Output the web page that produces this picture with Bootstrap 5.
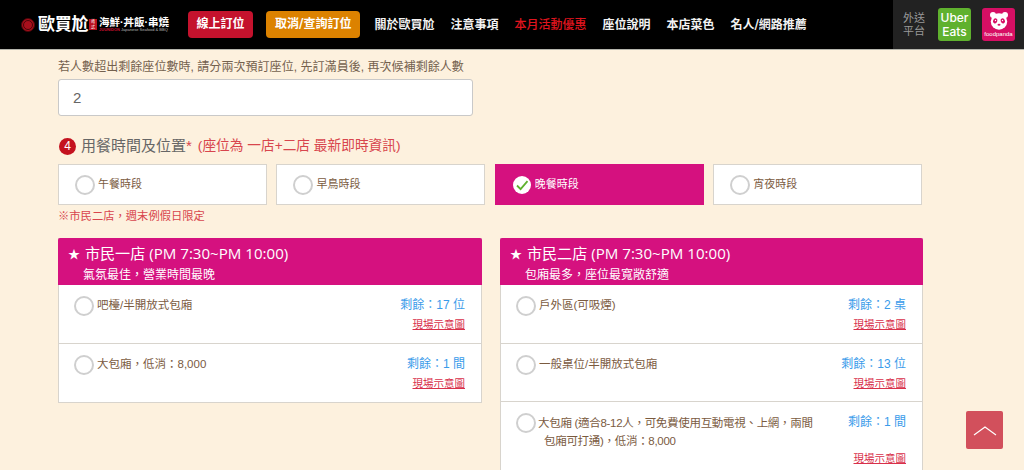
<!DOCTYPE html>
<html lang="zh-Hant">
<head>
  <meta charset="UTF-8">
  <meta name="viewport" content="width=device-width, initial-scale=1.0">
  <title>線上訂位</title>
  <link href="https://cdn.jsdelivr.net/npm/bootstrap@5.3.0/dist/css/bootstrap.min.css" rel="stylesheet">
  <style>
    html, body {
      height: 470px;
      overflow: hidden;
    }
    body {
      background-color: #fdf1de;
      color: #7b5b3f;
      font-family: "Liberation Sans", "Noto Sans CJK TC", sans-serif;
      font-size: 12px;
    }
    .top-bar {
      height: 50px;
      background-color: #000;
      border-bottom: 1px solid #b5b5ad;
      padding: 0;
    }
    .brand {
      width: 152px;
      margin: 0 16px 0 20px;
      padding-left: 1px;
      color: #fff;
      line-height: 1;
      white-space: nowrap;
    }
    .brand-mark {
      width: 14px;
      height: 14px;
      flex: none;
      border-radius: 50%;
      background-color: #a80f1c;
      border: 3px double #4a0509;
    }
    .brand-name {
      font-size: 17px;
      font-weight: 700;
      letter-spacing: -.3px;
      margin-left: 3px;
    }
    .brand-seal {
      width: 8px;
      height: 11px;
      margin: 0 2px 0 1px;
      flex: none;
      background-color: #b90f1e;
      font-size: 4px;
      line-height: 5.5px;
      text-align: center;
    }
    .brand-tag {
      font-size: 10.5px;
      font-weight: 700;
      margin-bottom: 1px;
    }
    .brand-sub {
      font-size: 4px;
      color: #bbb;
    }
    .brand-sub b {
      color: #c8102e;
    }
    .nav-btn {
      height: 27px;
      padding: 0 8.5px;
      border: 0;
      border-radius: 4px;
      color: #fff;
      font-size: 12px;
      font-weight: 700;
      line-height: 27px;
      margin-right: 13px;
    }
    .nav-btn-red { background-color: #c4122d; }
    .nav-btn-orange {
      background-color: #dc8200;
      padding: 0 9px;
      margin-right: 14px;
      font-family: "DejaVu Serif", "Noto Sans CJK TC", serif;
    }
    .nav-btn-red:hover { background-color: #c4122d; color: #fff; }
    .nav-btn-orange:hover { background-color: #dc8200; color: #fff; }
    .site-link {
      color: #f2f2f2;
      font-family: "DejaVu Serif", "Noto Sans CJK TC", serif;
      font-size: 12px;
      font-weight: 700;
      text-decoration: none;
      margin-right: 16px;
      white-space: nowrap;
    }
    .site-link-hot { color: #e0141e; font-weight: 500; }
    .delivery {
      width: 131px;
      height: 49px;
      background-color: #222;
      gap: 11px;
      padding-left: 10px;
      color: #999;
      font-size: 11px;
      line-height: 13px;
    }
    .delivery-logo {
      width: 33px;
      height: 33px;
      border-radius: 3px;
      color: #fff;
      text-align: center;
      text-decoration: none;
      flex: none;
    }
    .uber-logo {
      margin-left: 2px;
      background-color: #5fb12e;
      font-size: 12px;
      line-height: 14px;
      padding-top: 3px;
      font-family: "Inter", sans-serif;
      font-weight: 500;
    }
    .panda-logo {
      background-color: #d70f64;
      font-size: 6px;
      line-height: 7px;
      padding-top: 3px;
      white-space: nowrap;
      overflow: hidden;
    }
    .panda-logo svg {
      display: block;
      margin: 0 auto 1px;
    }
    .form-wrap {
      width: 865px;
      margin-left: 58px;
      padding-top: 9px;
    }
    .seat-hint {
      line-height: 16px;
      margin-bottom: 4px;
      letter-spacing: .05px;
      color: #74614e;
    }
    .seat-input {
      width: 415px;
      height: 37px;
      padding: 0 14px;
      border: 1px solid #c9c9c9;
      border-radius: 3px;
      color: #666;
      font-size: 15px;
    }
    .step-title {
      margin-top: 20px;
      height: 20px;
      font-size: 15px;
      line-height: 20px;
      color: #666;
      font-weight: 400;
    }
    .step-num {
      width: 17px;
      height: 17px;
      margin: 0 5px 0 1px;
      flex: none;
      border-radius: 50%;
      background-color: #c4121f;
      color: #fff;
      font-size: 12px;
      line-height: 17px;
      text-align: center;
    }
    .step-star { color: #d8454d; margin-right: 6px; }
    .step-note { color: #d8454d; font-size: 13.7px; }
    .time-grid {
      display: grid;
      grid-template-columns: repeat(4, 209px);
      column-gap: 9.4px;
      margin-top: 8px;
    }
    .time-opt {
      height: 41px;
      padding-left: 16px;
      background-color: #fff;
      border: 1px solid #d8d4cd;
      font-size: 11px;
      gap: 3px;
    }
    .time-opt-on {
      background-color: #d5117f;
      border-color: #d5117f;
      color: #fff;
    }
    .tick {
      width: 20px;
      height: 20px;
      flex: none;
      border-radius: 50%;
      border: 2px solid #cfcfcf;
      background-color: #fff;
    }
    .tick-on {
      width: 18px;
      height: 18px;
      margin: 0 1px;
      border: 0;
    }
    .tick-on svg { display: block; }
    .weekend-note {
      color: #d8454d;
      font-size: 11.3px;
      line-height: 16px;
      margin-top: 3px;
    }
    .store-row {
      margin-top: 14px;
      gap: 18px;
      align-items: flex-start;
    }
    .store-card {
      --bs-card-inner-border-radius: 2px;
      width: 424px;
      flex: none;
      border: 1px solid #d8d4cd;
      border-radius: 0;
      background-color: #fff;
      color: #7b5b3f;
    }
    .store-card:last-child { width: 423px; }
    .store-head {
      height: 47px;
      margin: -1px -1px 0;
      padding: 5px 10px 0;
      background-color: #d5117f;
      border: 0;
      color: #fff;
      font-family: "Open Sans", "Noto Sans CJK TC", sans-serif;
      font-size: 15.1px;
      line-height: 20px;
    }
    .store-star { font-size: 12px; margin-right: 1px; }
    .store-sub {
      font-size: 12px;
      line-height: 16px;
      padding-left: 15px;
      margin-top: 2px;
    }
    .seat-row {
      min-height: 58.5px;
      padding: 11px 16px 0 15px;
      border-color: #d8d4cd;
      color: #7b5b3f;
      font-size: 11.5px;
      gap: 3px;
    }
    .seat-row:last-child { border-bottom: 0; }
    .seat-row-tall { padding-bottom: 16px; }
    .seat-name {
      line-height: 18px;
      width: 328px;
    }
    .seat-name-wrap {
      margin-left: -1px;
      padding-top: 1px;
      letter-spacing: -.3px;
    }
    .seat-name-wrap span {
      display: block;
      padding-left: 6px;
    }
    .seat-side {
      margin-left: auto;
      text-align: right;
      white-space: nowrap;
    }
    .seat-left {
      color: #3a9bea;
      font-size: 12px;
      line-height: 18px;
    }
    .seat-map {
      display: block;
      margin-top: 2px;
      color: #d8304a;
      font-size: 10.5px;
      line-height: 16px;
    }
    .seat-map-low { margin-top: 19px; }
    .to-top {
      position: fixed;
      left: 966px;
      top: 411px;
      width: 37px;
      height: 38px;
      border-radius: 2px;
      background-color: #d2505c;
    }
    .to-top svg { display: block; margin: 0 auto; }
  </style>
</head>
<body>
  <nav class="navbar top-bar flex-nowrap">
    <div class="d-flex align-items-center w-100">
      <a class="brand d-flex align-items-center text-decoration-none" href="#">
        <span class="brand-mark"></span>
        <span class="brand-name">歐買尬</span>
        <span class="brand-seal">道<br>式</span>
        <span>
          <div class="brand-tag">海鮮·丼飯·串燒</div>
          <div class="brand-sub"><b>JUUNIDON</b> Japanese Seafood &amp; BBQ</div>
        </span>
      </a>
      <a class="btn nav-btn nav-btn-red" href="#">線上訂位</a>
      <a class="btn nav-btn nav-btn-orange" href="#">取消/查詢訂位</a>
      <a class="site-link" href="#">關於歐買尬</a>
      <a class="site-link" href="#">注意事項</a>
      <a class="site-link site-link-hot" href="#">本月活動優惠</a>
      <a class="site-link" href="#">座位說明</a>
      <a class="site-link" href="#">本店菜色</a>
      <a class="site-link" href="#">名人/網路推薦</a>
      <div class="delivery d-flex align-items-center ms-auto">
        <div class="text-center">外送<br>平台</div>
        <a class="delivery-logo uber-logo" href="#">Uber<br>Eats</a>
        <a class="delivery-logo panda-logo" href="#">
          <svg width="20" height="19" viewBox="0 0 20 19">
            <circle cx="4" cy="4" r="3" fill="#fff"/>
            <circle cx="16" cy="4" r="3" fill="#fff"/>
            <circle cx="10" cy="10.5" r="8.2" fill="#fff"/>
            <ellipse cx="6.2" cy="9.8" rx="2.1" ry="2.6" fill="#d70f64" transform="rotate(25 6.2 9.8)"/>
            <ellipse cx="13.8" cy="9.8" rx="2.1" ry="2.6" fill="#d70f64" transform="rotate(-25 13.8 9.8)"/>
            <circle cx="6.5" cy="9.5" r=".7" fill="#fff"/>
            <circle cx="13.5" cy="9.5" r=".7" fill="#fff"/>
            <ellipse cx="10" cy="13.8" rx="1.5" ry="1" fill="#d70f64"/>
          </svg>
          foodpanda
        </a>
      </div>
    </div>
  </nav>

  <main class="form-wrap">
    <div class="seat-hint">若人數超出剩餘座位數時, 請分兩次預訂座位, 先訂滿員後, 再次候補剩餘人數</div>
    <input class="form-control seat-input" type="text" value="2">

    <h2 class="step-title d-flex align-items-center mb-0">
      <span class="step-num">4</span>用餐時間及位置<span class="step-star">*</span>
      <span class="step-note">(座位為 一店+二店 最新即時資訊)</span>
    </h2>

    <div class="time-grid">
      <div class="time-opt d-flex align-items-center"><span class="tick"></span>午餐時段</div>
      <div class="time-opt d-flex align-items-center"><span class="tick"></span>早鳥時段</div>
      <div class="time-opt time-opt-on d-flex align-items-center">
        <span class="tick tick-on">
          <svg width="18" height="18" viewBox="0 0 18 18"><path d="M4 9.5l3.6 3.6L14.5 5.2" fill="none" stroke="#5fb12e" stroke-width="1.8"/></svg>
        </span>晚餐時段
      </div>
      <div class="time-opt d-flex align-items-center"><span class="tick"></span>宵夜時段</div>
    </div>
    <div class="weekend-note">※市民二店，週末例假日限定</div>

    <div class="store-row d-flex">
      <div class="card store-card">
        <div class="card-header store-head">
          <span class="store-star">★</span> 市民一店 (PM 7:30~PM 10:00)
          <div class="store-sub">氣氛最佳，營業時間最晚</div>
        </div>
        <ul class="list-group list-group-flush">
          <li class="list-group-item seat-row d-flex">
            <span class="tick"></span>
            <span class="seat-name">吧檯/半開放式包廂</span>
            <span class="seat-side"><span class="seat-left">剩餘：17 位</span><a class="seat-map" href="#">現場示意圖</a></span>
          </li>
          <li class="list-group-item seat-row d-flex">
            <span class="tick"></span>
            <span class="seat-name">大包廂，低消：8,000</span>
            <span class="seat-side"><span class="seat-left">剩餘：1 間</span><a class="seat-map" href="#">現場示意圖</a></span>
          </li>
        </ul>
      </div>

      <div class="card store-card">
        <div class="card-header store-head">
          <span class="store-star">★</span> 市民二店 (PM 7:30~PM 10:00)
          <div class="store-sub">包廂最多，座位最寬敞舒適</div>
        </div>
        <ul class="list-group list-group-flush">
          <li class="list-group-item seat-row d-flex">
            <span class="tick"></span>
            <span class="seat-name">戶外區(可吸煙)</span>
            <span class="seat-side"><span class="seat-left">剩餘：2 桌</span><a class="seat-map" href="#">現場示意圖</a></span>
          </li>
          <li class="list-group-item seat-row d-flex">
            <span class="tick"></span>
            <span class="seat-name">一般桌位/半開放式包廂</span>
            <span class="seat-side"><span class="seat-left">剩餘：13 位</span><a class="seat-map" href="#">現場示意圖</a></span>
          </li>
          <li class="list-group-item seat-row seat-row-tall d-flex">
            <span class="tick"></span>
            <span class="seat-name seat-name-wrap">大包廂 (適合8-12人，可免費使用互動電視、上網，兩間<span>包廂可打通)，低消：8,000</span></span>
            <span class="seat-side"><span class="seat-left">剩餘：1 間</span><a class="seat-map seat-map-low" href="#">現場示意圖</a></span>
          </li>
        </ul>
      </div>
    </div>
  </main>

  <a class="to-top d-flex align-items-center" href="#" aria-label="回到頂端">
    <svg width="24" height="12" viewBox="0 0 24 12"><path d="M1 11L12 3l11 8" fill="none" stroke="#fff" stroke-width="1.2"/></svg>
  </a>

  <script src="https://cdn.jsdelivr.net/npm/bootstrap@5.3.0/dist/js/bootstrap.bundle.min.js"></script>
</body>
</html>
